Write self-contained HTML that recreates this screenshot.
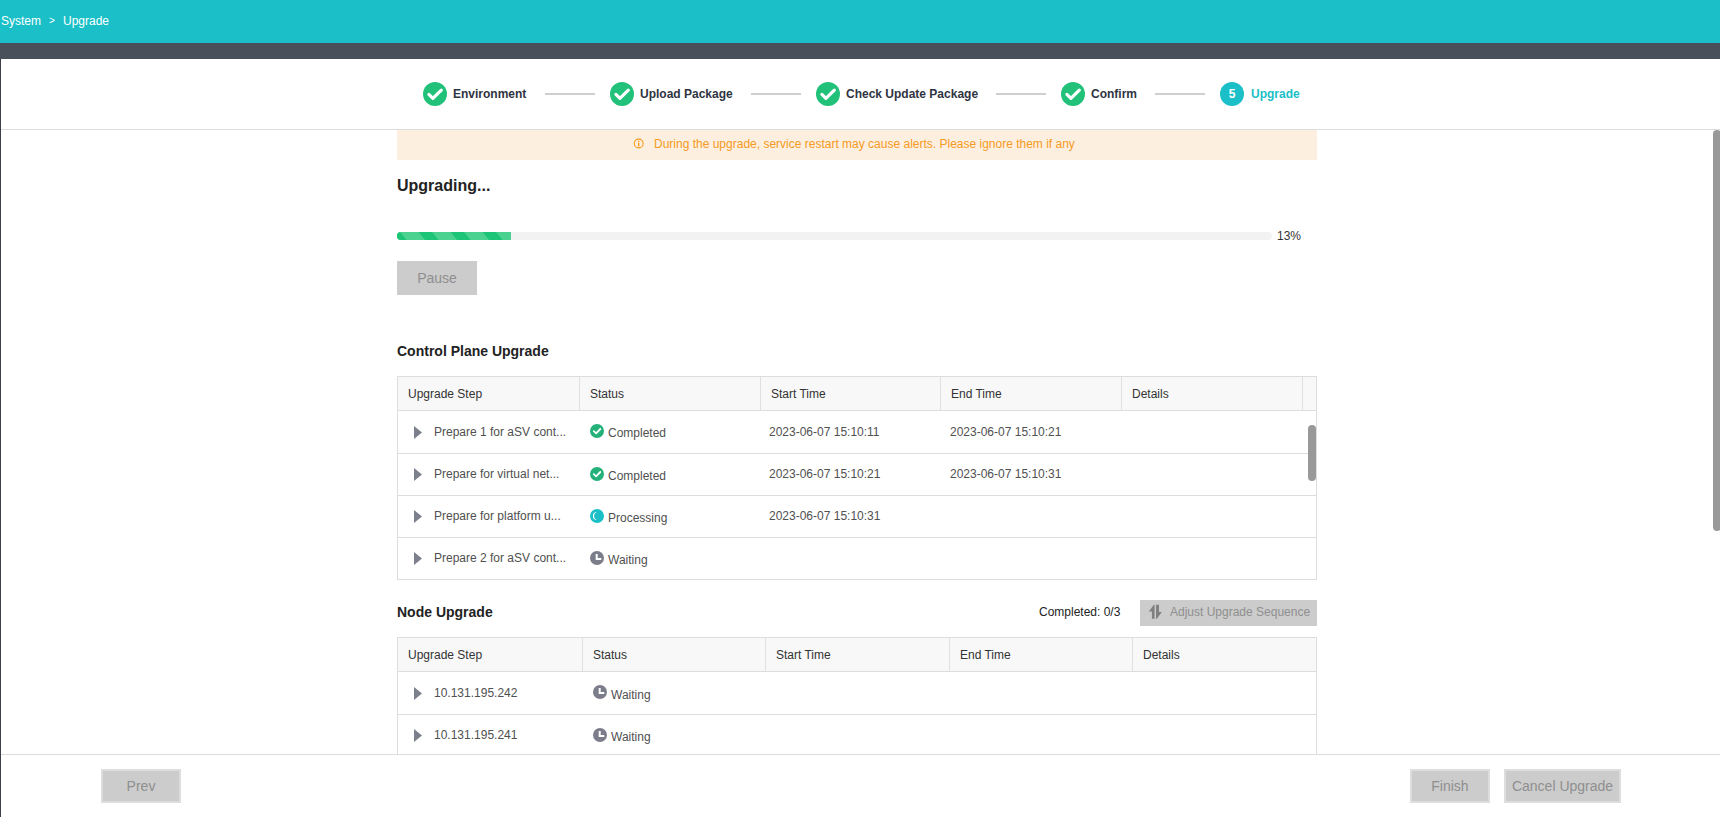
<!DOCTYPE html>
<html><head><meta charset="utf-8">
<style>
*{box-sizing:border-box;margin:0;padding:0}
html,body{width:1720px;height:817px;overflow:hidden;background:#fff;font-family:"Liberation Sans",sans-serif;color:#333}
.abs{position:absolute}
#top{left:0;top:0;width:1720px;height:43px;background:#1abfc7;color:#fff;font-size:12px}
#band{left:0;top:43px;width:1720px;height:16px;background:#4a505a}
#lborder{left:0;top:59px;width:1px;height:758px;background:#3c4048}
#steps{left:1px;top:59px;width:1719px;height:71px;border-bottom:1px solid #dcdcdc}
.ico{width:24px;height:24px;border-radius:50%;background:#21c17a}
.stxt{font-size:12px;font-weight:bold;color:#2f3442;white-space:nowrap;line-height:14px}
.sline{height:2px;background:#cfcfcf}
#alert{left:397px;top:130px;width:920px;height:30px;background:#fdefe0;color:#f59a23;font-size:12px}
.h{font-weight:bold;color:#222;white-space:nowrap}
.btn{background:#cccccc;color:#8f8f8f;font-size:14px;text-align:center}
table{border-collapse:collapse;font-size:12px;color:#333}
.tbl{border:1px solid #dddddd}
.hdr{background:#f8f8f8;border-bottom:1px solid #dddddd}
.col{position:absolute;top:0;height:100%;white-space:nowrap}
.cell{font-size:12px;white-space:nowrap;color:#333;line-height:14px}
.tri{width:0;height:0;border-top:6px solid transparent;border-bottom:6px solid transparent;border-left:8px solid #7f8290}
.rowline{height:1px;background:#dddddd}
</style></head><body>
<div id="top" class="abs"><span class="abs" style="left:1px;top:14px">System</span><span class="abs" style="left:49px;top:15px;font-size:10px;line-height:12px">&gt;</span><span class="abs" style="left:63px;top:14px">Upgrade</span></div>
<div id="band" class="abs"></div>
<div id="lborder" class="abs"></div>
<div id="steps" class="abs"></div>

<div class="abs" style="left:423px;top:82px"><svg width="24" height="24" viewBox="0 0 24 24"><circle cx="12" cy="12" r="12" fill="#21c17a"/><path d="M5.9 12.4 L9.9 16.3 L18.3 8.1" fill="none" stroke="#fff" stroke-width="3.2" stroke-linecap="round" stroke-linejoin="round"/></svg></div>
<div class="abs stxt" style="left:453px;top:87px">Environment</div>
<div class="abs sline" style="left:545px;top:93px;width:50px"></div>
<div class="abs" style="left:610px;top:82px"><svg width="24" height="24" viewBox="0 0 24 24"><circle cx="12" cy="12" r="12" fill="#21c17a"/><path d="M5.9 12.4 L9.9 16.3 L18.3 8.1" fill="none" stroke="#fff" stroke-width="3.2" stroke-linecap="round" stroke-linejoin="round"/></svg></div>
<div class="abs stxt" style="left:640px;top:87px">Upload Package</div>
<div class="abs sline" style="left:751px;top:93px;width:50px"></div>
<div class="abs" style="left:816px;top:82px"><svg width="24" height="24" viewBox="0 0 24 24"><circle cx="12" cy="12" r="12" fill="#21c17a"/><path d="M5.9 12.4 L9.9 16.3 L18.3 8.1" fill="none" stroke="#fff" stroke-width="3.2" stroke-linecap="round" stroke-linejoin="round"/></svg></div>
<div class="abs stxt" style="left:846px;top:87px">Check Update Package</div>
<div class="abs sline" style="left:996px;top:93px;width:50px"></div>
<div class="abs" style="left:1061px;top:82px"><svg width="24" height="24" viewBox="0 0 24 24"><circle cx="12" cy="12" r="12" fill="#21c17a"/><path d="M5.9 12.4 L9.9 16.3 L18.3 8.1" fill="none" stroke="#fff" stroke-width="3.2" stroke-linecap="round" stroke-linejoin="round"/></svg></div>
<div class="abs stxt" style="left:1091px;top:87px">Confirm</div>
<div class="abs sline" style="left:1155px;top:93px;width:50px"></div>
<div class="abs" style="left:1220px;top:82px;width:24px;height:24px;border-radius:50%;background:#1abfc7;color:#fff;font-size:12px;font-weight:bold;text-align:center;line-height:24px">5</div>
<div class="abs stxt" style="left:1251px;top:87px;color:#1abfc7">Upgrade</div>
<div id="alert" class="abs"><svg class="abs" style="left:236px;top:8px" width="11" height="11" viewBox="0 0 11 11"><circle cx="5.7" cy="5.5" r="4.4" fill="none" stroke="#f99a1c" stroke-width="1.1"/><rect x="5" y="2.8" width="1.4" height="1.3" fill="#f99a1c"/><rect x="5" y="4.8" width="1.4" height="3.6" fill="#f99a1c"/></svg><span class="abs" style="left:257px;top:7px;white-space:nowrap">During the upgrade, service restart may cause alerts. Please ignore them if any</span></div>

<div class="abs h" style="left:397px;top:177px;font-size:16px;line-height:18px">Upgrading...</div>
<div class="abs" style="left:397px;top:232px;width:875px;height:8px;border-radius:4px;background:#f2f2f2"></div>
<svg class="abs" style="left:397px;top:232px" width="114" height="8" viewBox="0 0 114 8"><defs><clipPath id="pc"><path d="M4 0 H114 V8 H4 A4 4 0 0 1 4 0 Z"/></clipPath></defs><g clip-path="url(#pc)"><rect width="114" height="8" fill="#4bd190"/><polygon points="-10.40,0 3.00,0 9.50,8 -3.90,8" fill="#1cc477"/><polygon points="21.60,0 35.00,0 41.50,8 28.10,8" fill="#1cc477"/><polygon points="53.60,0 67.00,0 73.50,8 60.10,8" fill="#1cc477"/><polygon points="85.60,0 99.00,0 105.50,8 92.10,8" fill="#1cc477"/><polygon points="117.60,0 131.00,0 137.50,8 124.10,8" fill="#1cc477"/></g></svg>
<div class="abs cell" style="left:1277px;top:229px;">13%</div>
<div class="abs btn" style="left:397px;top:261px;width:80px;height:34px;line-height:34px">Pause</div>
<div class="abs h" style="left:397px;top:343px;font-size:14px;line-height:16px">Control Plane Upgrade</div>
<div class="abs" style="left:397px;top:376px;width:920px;height:204px;border:1px solid #dddddd"></div>
<div class="abs" style="left:398px;top:377px;width:918px;height:34px;background:#f8f8f8;border-bottom:1px solid #dddddd"></div>
<div class="abs" style="left:579px;top:377px;width:1px;height:33px;background:#e0e0e0"></div>
<div class="abs" style="left:760px;top:377px;width:1px;height:33px;background:#e0e0e0"></div>
<div class="abs" style="left:940px;top:377px;width:1px;height:33px;background:#e0e0e0"></div>
<div class="abs" style="left:1121px;top:377px;width:1px;height:33px;background:#e0e0e0"></div>
<div class="abs" style="left:1302px;top:377px;width:1px;height:33px;background:#e0e0e0"></div>
<div class="abs" style="left:398px;top:453px;width:918px;height:1px;background:#dddddd"></div>
<div class="abs" style="left:398px;top:495px;width:918px;height:1px;background:#dddddd"></div>
<div class="abs" style="left:398px;top:537px;width:918px;height:1px;background:#dddddd"></div>
<div class="abs cell" style="left:408px;top:387px;color:#333">Upgrade Step</div>
<div class="abs cell" style="left:590px;top:387px;color:#333">Status</div>
<div class="abs cell" style="left:771px;top:387px;color:#333">Start Time</div>
<div class="abs cell" style="left:951px;top:387px;color:#333">End Time</div>
<div class="abs cell" style="left:1132px;top:387px;color:#333">Details</div>
<svg class="abs" style="left:414px;top:426px" width="8" height="13" viewBox="0 0 8 13"><path d="M0 0 L8 6.5 L0 13 Z" fill="#7c7f8c"/></svg>
<div class="abs cell" style="left:434px;top:425px;color:#505050">Prepare 1 for aSV cont...</div>
<svg class="abs" style="left:590px;top:424px" width="14" height="14" viewBox="0 0 14 14"><circle cx="7" cy="7" r="7" fill="#24b27a"/><path d="M3.8 7.2 L6.1 9.3 L10.3 5" fill="none" stroke="#fff" stroke-width="1.8" stroke-linecap="round" stroke-linejoin="round"/></svg>
<div class="abs cell" style="left:608px;top:426px;color:#505050">Completed</div>
<div class="abs cell" style="left:769px;top:425px;color:#505050">2023-06-07 15:10:11</div>
<div class="abs cell" style="left:950px;top:425px;color:#505050">2023-06-07 15:10:21</div>
<svg class="abs" style="left:414px;top:468px" width="8" height="13" viewBox="0 0 8 13"><path d="M0 0 L8 6.5 L0 13 Z" fill="#7c7f8c"/></svg>
<div class="abs cell" style="left:434px;top:467px;color:#505050">Prepare for virtual net...</div>
<svg class="abs" style="left:590px;top:467px" width="14" height="14" viewBox="0 0 14 14"><circle cx="7" cy="7" r="7" fill="#24b27a"/><path d="M3.8 7.2 L6.1 9.3 L10.3 5" fill="none" stroke="#fff" stroke-width="1.8" stroke-linecap="round" stroke-linejoin="round"/></svg>
<div class="abs cell" style="left:608px;top:469px;color:#505050">Completed</div>
<div class="abs cell" style="left:769px;top:467px;color:#505050">2023-06-07 15:10:21</div>
<div class="abs cell" style="left:950px;top:467px;color:#505050">2023-06-07 15:10:31</div>
<svg class="abs" style="left:414px;top:510px" width="8" height="13" viewBox="0 0 8 13"><path d="M0 0 L8 6.5 L0 13 Z" fill="#7c7f8c"/></svg>
<div class="abs cell" style="left:434px;top:509px;color:#505050">Prepare for platform u...</div>
<svg class="abs" style="left:590px;top:509px" width="14" height="14" viewBox="0 0 14 14"><circle cx="7" cy="7" r="7" fill="#1abfc7"/><path d="M6.9 3.1 A4 4 0 0 0 6.9 11.1 A4.25 4.25 0 0 1 6.9 3.1 Z" fill="#fff"/></svg>
<div class="abs cell" style="left:608px;top:511px;color:#505050">Processing</div>
<div class="abs cell" style="left:769px;top:509px;color:#505050">2023-06-07 15:10:31</div>
<svg class="abs" style="left:414px;top:552px" width="8" height="13" viewBox="0 0 8 13"><path d="M0 0 L8 6.5 L0 13 Z" fill="#7c7f8c"/></svg>
<div class="abs cell" style="left:434px;top:551px;color:#505050">Prepare 2 for aSV cont...</div>
<svg class="abs" style="left:590px;top:551px" width="14" height="14" viewBox="0 0 14 14"><circle cx="7" cy="7" r="7" fill="#7b7e8a"/><path d="M5.7 2.9 H7.7 V7 H11.3 V9 H5.7 Z" fill="#fff"/></svg>
<div class="abs cell" style="left:608px;top:553px;color:#505050">Waiting</div>
<div class="abs" style="left:1308px;top:425px;width:8px;height:56px;border-radius:4px;background:#999"></div>
<div class="abs h" style="left:397px;top:604px;font-size:14px;line-height:16px">Node Upgrade</div>
<div class="abs cell" style="left:1039px;top:605px;color:#222">Completed: 0/3</div>
<div class="abs" style="left:1140px;top:600px;width:177px;height:26px;background:#cccccc"><svg class="abs" style="left:0;top:0" width="30" height="26" viewBox="0 0 30 26"><path d="M8.85 11.6 L13.84 4.85 H14.58 V18.8 H11.93 V11.6 Z M16.04 4.85 H18.98 V12.04 H21.77 L16.93 18.8 H16.04 Z" fill="#808080"/></svg><span class="abs cell" style="left:30px;top:5px;color:#8f8f8f">Adjust Upgrade Sequence</span></div>
<div class="abs" style="left:397px;top:637px;width:920px;height:130px;border:1px solid #dddddd"></div>
<div class="abs" style="left:398px;top:638px;width:918px;height:34px;background:#f8f8f8;border-bottom:1px solid #dddddd"></div>
<div class="abs" style="left:582px;top:638px;width:1px;height:33px;background:#e0e0e0"></div>
<div class="abs" style="left:765px;top:638px;width:1px;height:33px;background:#e0e0e0"></div>
<div class="abs" style="left:949px;top:638px;width:1px;height:33px;background:#e0e0e0"></div>
<div class="abs" style="left:1132px;top:638px;width:1px;height:33px;background:#e0e0e0"></div>
<div class="abs" style="left:398px;top:714px;width:918px;height:1px;background:#dddddd"></div>
<div class="abs cell" style="left:408px;top:648px;color:#333">Upgrade Step</div>
<div class="abs cell" style="left:593px;top:648px;color:#333">Status</div>
<div class="abs cell" style="left:776px;top:648px;color:#333">Start Time</div>
<div class="abs cell" style="left:960px;top:648px;color:#333">End Time</div>
<div class="abs cell" style="left:1143px;top:648px;color:#333">Details</div>
<svg class="abs" style="left:414px;top:687px" width="8" height="13" viewBox="0 0 8 13"><path d="M0 0 L8 6.5 L0 13 Z" fill="#7c7f8c"/></svg>
<div class="abs cell" style="left:434px;top:686px;color:#505050">10.131.195.242</div>
<svg class="abs" style="left:593px;top:685px" width="14" height="14" viewBox="0 0 14 14"><circle cx="7" cy="7" r="7" fill="#7b7e8a"/><path d="M5.7 2.9 H7.7 V7 H11.3 V9 H5.7 Z" fill="#fff"/></svg>
<div class="abs cell" style="left:611px;top:688px;color:#505050">Waiting</div>
<svg class="abs" style="left:414px;top:729px" width="8" height="13" viewBox="0 0 8 13"><path d="M0 0 L8 6.5 L0 13 Z" fill="#7c7f8c"/></svg>
<div class="abs cell" style="left:434px;top:728px;color:#505050">10.131.195.241</div>
<svg class="abs" style="left:593px;top:728px" width="14" height="14" viewBox="0 0 14 14"><circle cx="7" cy="7" r="7" fill="#7b7e8a"/><path d="M5.7 2.9 H7.7 V7 H11.3 V9 H5.7 Z" fill="#fff"/></svg>
<div class="abs cell" style="left:611px;top:730px;color:#505050">Waiting</div>
<div class="abs" style="left:1px;top:754px;width:1719px;height:63px;background:#fff;border-top:1px solid #dcdcdc"></div>
<div class="abs" style="left:101px;top:769px;width:80px;background:#cccccc;border:2px solid #dddddd;color:#8f8f8f;font-size:14px;text-align:center;line-height:30px;height:34px">Prev</div>
<div class="abs" style="left:1410px;top:769px;width:80px;background:#cccccc;border:2px solid #dddddd;color:#8f8f8f;font-size:14px;text-align:center;line-height:30px;height:34px">Finish</div>
<div class="abs" style="left:1504px;top:769px;width:117px;background:#cccccc;border:2px solid #dddddd;color:#8f8f8f;font-size:14px;text-align:center;line-height:30px;height:34px">Cancel Upgrade</div>
<div class="abs" style="left:1713px;top:130px;width:8px;height:401px;border-radius:4px;background:#999"></div>
</body></html>
